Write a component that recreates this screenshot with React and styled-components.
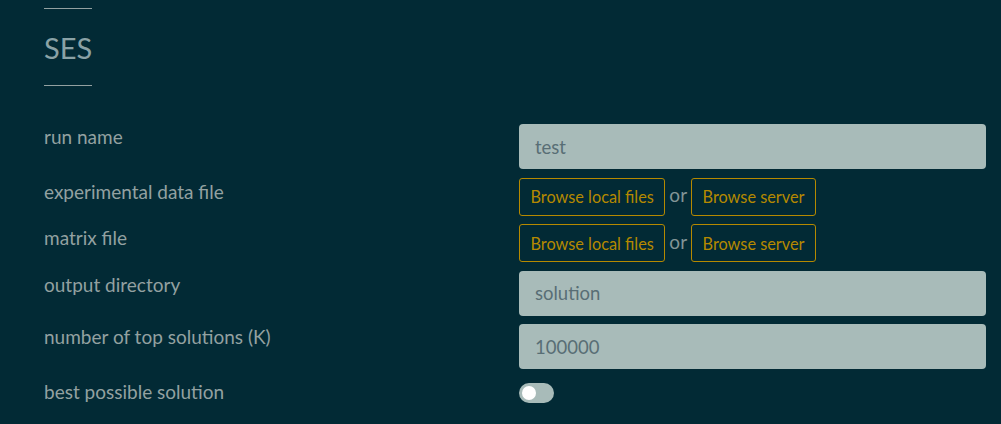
import React, { useState } from "react";
import styled, { createGlobalStyle } from "styled-components";

const GlobalStyle = createGlobalStyle`
  html, body {
    margin: 0;
    padding: 0;
    background-color: #022a35;
  }
  body {
    font-family: "Lato", "Noto Sans", sans-serif;
  }
`;

const Page = styled.div`
  width: 1001px;
  height: 424px;
  overflow: hidden;
  background-color: #022a35;
  padding: 8px 15px 0 44px;
  box-sizing: border-box;
`;

const Section = styled.div`
  display: flex;
  flex-direction: column;
`;

const Rule = styled.hr`
  width: 48px;
  height: 1px;
  border: none;
  margin: 0;
  background-color: #93a1a1;
`;

const Title = styled.h2`
  margin: 0;
  padding: 21px 0 19px;
  font-size: 29px;
  font-weight: 400;
  line-height: 36px;
  color: #8aa2a6;
`;

const Form = styled.div`
  display: flex;
  flex-direction: column;
  gap: 8.5px;
  margin-top: 38px;
`;

const Row = styled.div`
  display: grid;
  grid-template-columns: 1fr 1fr;
  column-gap: 8px;
  align-items: start;
`;

const Label = styled.div`
  font-size: 19px;
  line-height: 24px;
  padding-top: ${(p) => p.$offset}px;
  color: #93a1a1;
`;

const TextInput = styled.input`
  box-sizing: border-box;
  width: 100%;
  height: 45px;
  border: none;
  border-radius: 4px;
  padding: 0 16px;
  background-color: #a8bbb9;
  color: #586e75;
  font-family: inherit;
  font-size: 18.5px;
  outline: none;
`;

const Buttons = styled.div`
  display: flex;
  align-items: center;
  gap: 4px;
`;

const BrowseButton = styled.button`
  height: 38px;
  padding: 0 10.5px;
  border: 1px solid #b58900;
  border-radius: 3px;
  background: transparent;
  color: #b58900;
  font-family: inherit;
  font-size: 16.3px;
  cursor: pointer;
`;

const Or = styled.span`
  font-size: 19px;
  color: #839496;
  margin-top: -4px;
`;

const Switch = styled.button`
  position: relative;
  width: 35px;
  height: 20px;
  margin-top: 5px;
  border: none;
  border-radius: 10px;
  padding: 0;
  background-color: #a8bbb9;
  cursor: pointer;

  &::after {
    content: "";
    position: absolute;
    top: 3px;
    left: ${(p) => (p.$on ? "18px" : "3px")};
    width: 14px;
    height: 14px;
    border-radius: 50%;
    background-color: #ffffff;
  }
`;

const FileChooser = () => (
  <Buttons>
    <BrowseButton>Browse local files</BrowseButton>
    <Or>or</Or>
    <BrowseButton>Browse server</BrowseButton>
  </Buttons>
);

export default function App() {
  const [best, setBest] = useState(false);

  return (
    <Page>
      <GlobalStyle />
      <Section>
        <Rule />
        <Title>SES</Title>
        <Rule />
      </Section>
      <Form>
        <Row>
          <Label $offset={1}>run name</Label>
          <TextInput defaultValue="test" />
        </Row>
        <Row>
          <Label $offset={2}>experimental data file</Label>
          <FileChooser />
        </Row>
        <Row>
          <Label $offset={2}>matrix file</Label>
          <FileChooser />
        </Row>
        <Row>
          <Label $offset={2}>output directory</Label>
          <TextInput defaultValue="solution" />
        </Row>
        <Row>
          <Label $offset={1}>number of top solutions (K)</Label>
          <TextInput defaultValue="100000" />
        </Row>
        <Row>
          <Label $offset={2}>best possible solution</Label>
          <Switch $on={best} onClick={() => setBest(!best)} />
        </Row>
      </Form>
    </Page>
  );
}
